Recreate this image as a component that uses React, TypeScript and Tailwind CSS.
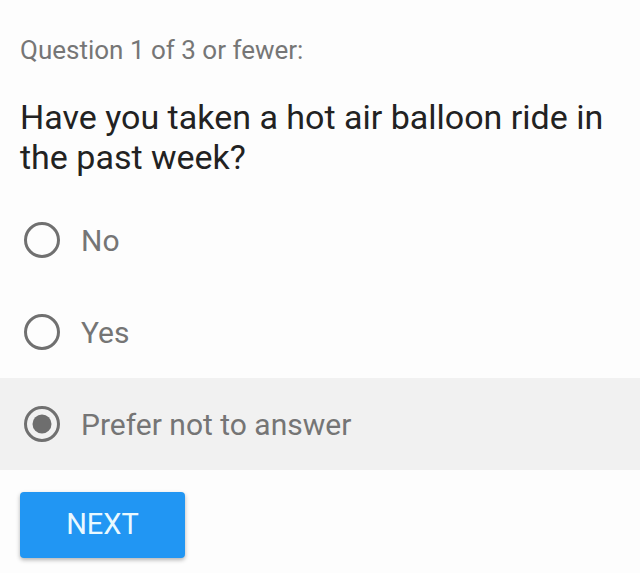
const options = ['No', 'Yes', 'Prefer not to answer'];

function Radio({ checked }: { checked: boolean }) {
  return (
    <svg width="40" height="40" viewBox="0 0 40 40" className="shrink-0">
      <circle cx="20" cy="20" r="16.5" fill="none" stroke="#707070" strokeWidth="3" />
      {checked && <circle cx="20" cy="20" r="9.5" fill="#6e6e6e" />}
    </svg>
  );
}

export default function App() {
  const selected = 2;
  return (
    <div className="min-h-[573px] w-[640px] bg-[#fdfdfd] pt-[35px] font-['Roboto',sans-serif]">
      <p className="px-5 text-[26px] leading-[30px] text-[#767676]">Question 1 of 3 or fewer:</p>
      <h1 className="mt-[32px] px-5 text-[34px] leading-[40px] text-[#222]">
        Have you taken a hot air balloon ride in the past week?
      </h1>
      <div className="mt-[17px] flex flex-col">
        {options.map((opt, i) => (
          <label
            key={opt}
            className={`flex h-[92px] items-center gap-[19px] px-[22px] ${i === selected ? 'bg-[#f1f1f1]' : ''}`}
          >
            <Radio checked={i === selected} />
            <span className="text-[30px] text-[#757575]">{opt}</span>
          </label>
        ))}
      </div>
      <button className="ml-5 mt-[22px] flex h-[66px] w-[165px] items-center justify-center rounded-[4px] bg-[#2196f3] text-[29px] text-[#eaf9ff] shadow-[0_2px_4px_rgba(0,0,0,0.3)]">
        NEXT
      </button>
    </div>
  );
}
